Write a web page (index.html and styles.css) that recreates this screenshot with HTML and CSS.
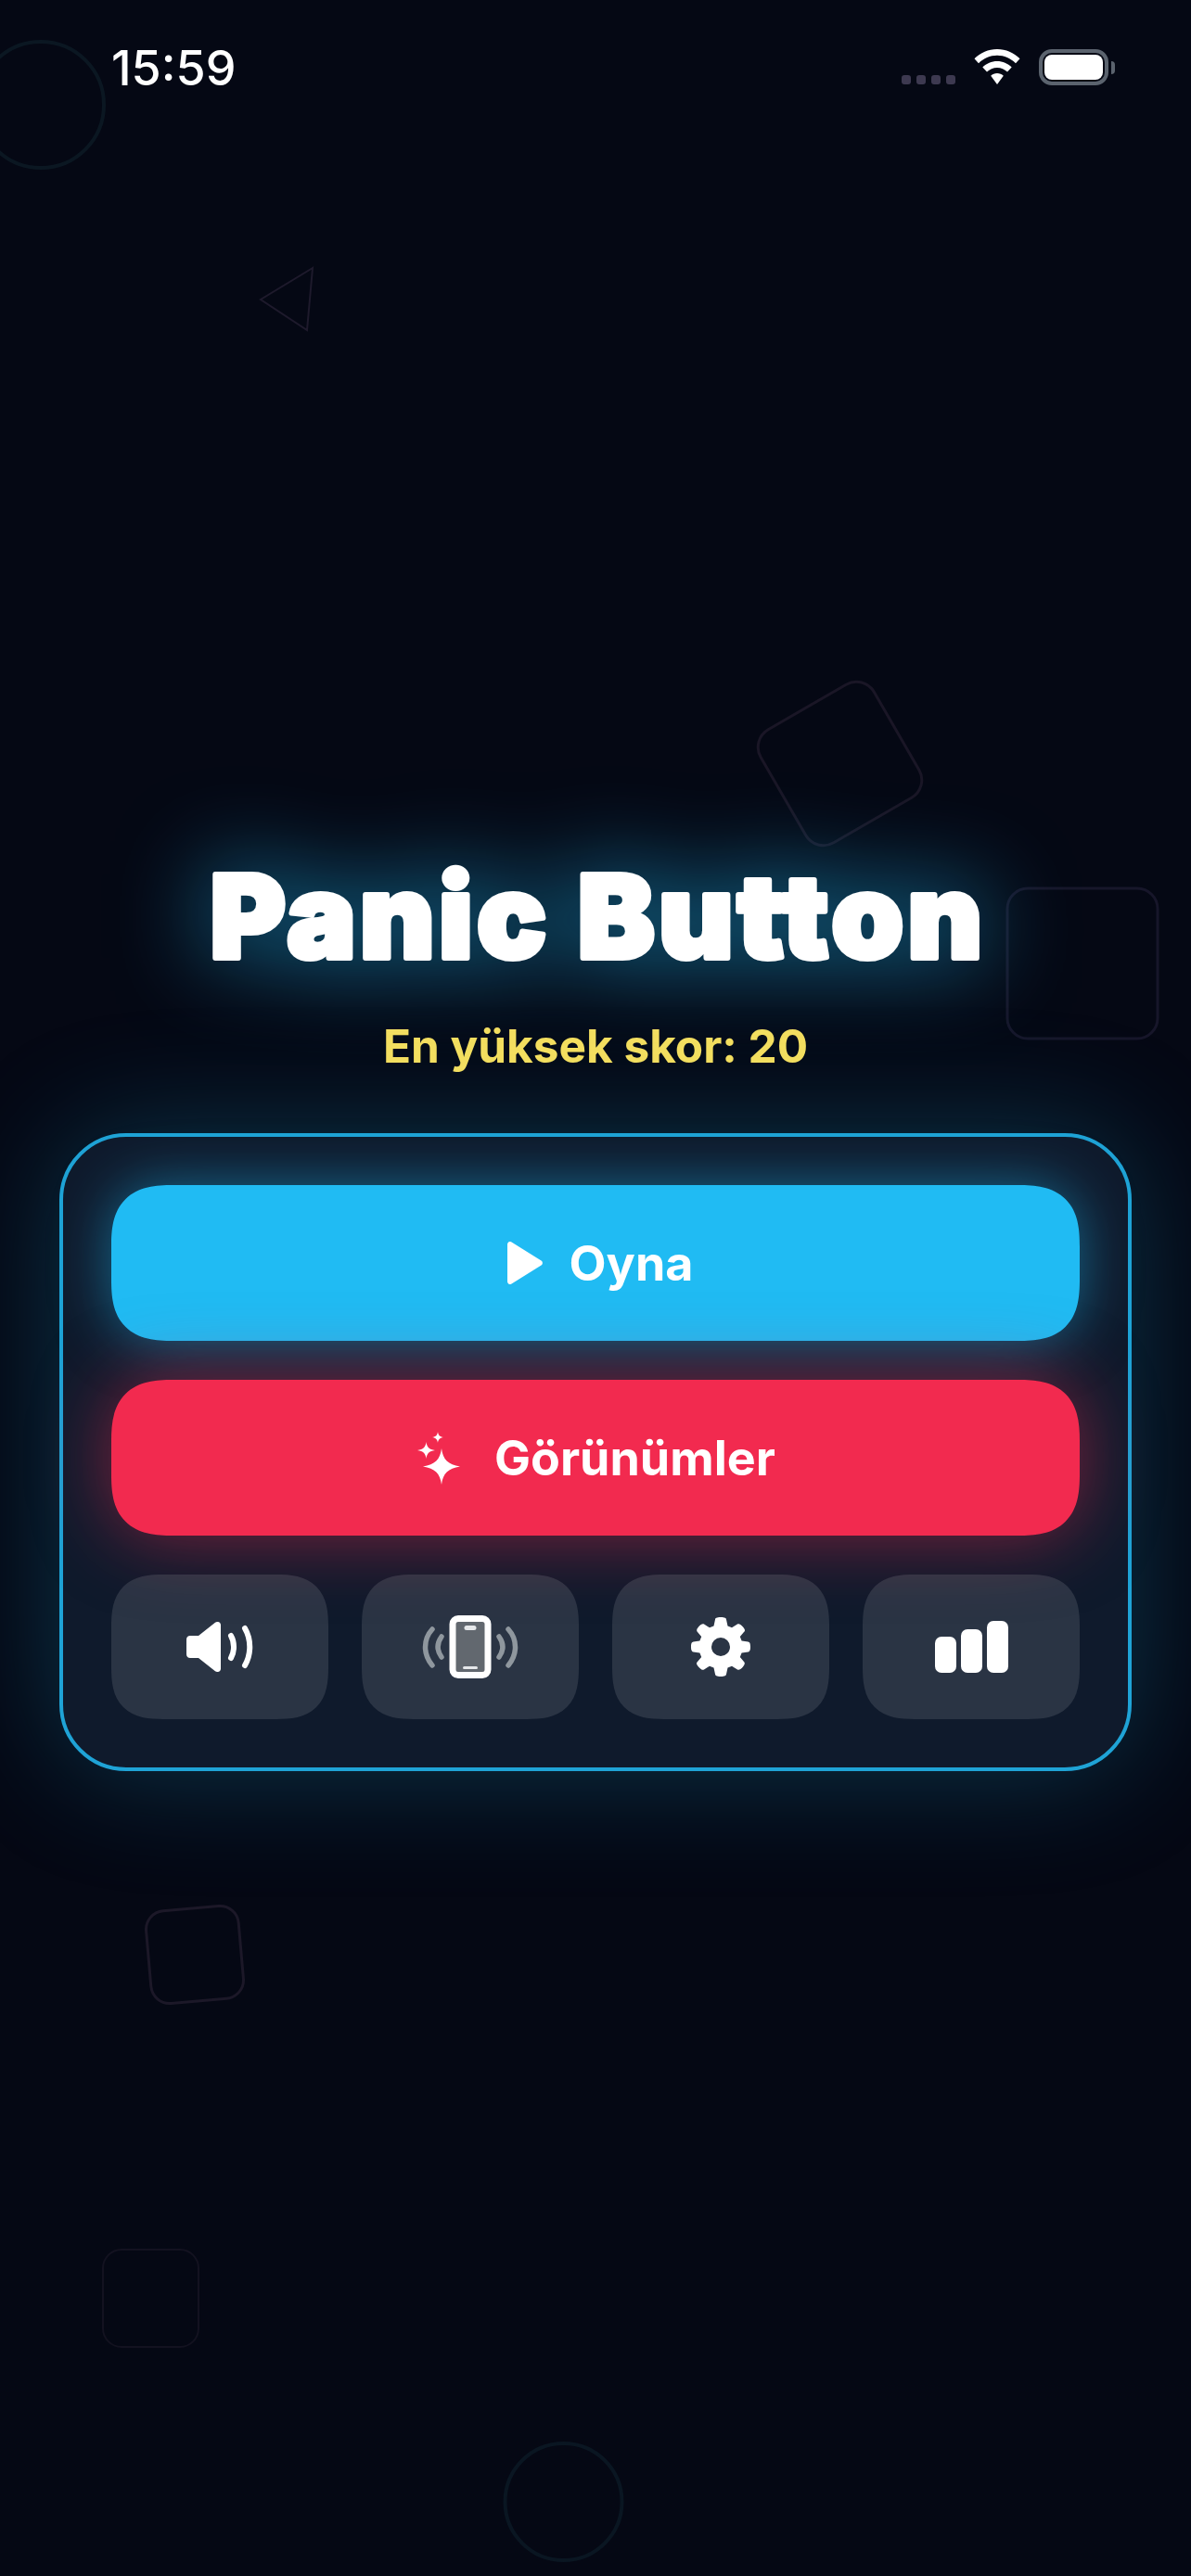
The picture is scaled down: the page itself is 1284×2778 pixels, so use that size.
FILE: index.html
```html
<!DOCTYPE html>
<html lang="en">
<head>
    <meta charset="UTF-8">
    <meta name="viewport" content="width=device-width, initial-scale=1.0">
    <title>Panic Button</title>
    <link rel="stylesheet" href="styles.css">
</head>
<body>
    <svg class="decor" width="1284" height="2778" viewBox="0 0 1284 2778" fill="none">
        <circle cx="44" cy="113" r="68" stroke="#0b1722" stroke-width="4"/>
        <path d="M337 289 L281 323 L331 356 Z" stroke="#1e1a2c" stroke-width="2"/>
        <rect x="835" y="753" width="141" height="141" rx="22" transform="rotate(-30 905.500 823.500)" stroke="#1a1626" stroke-width="3"/>
        <rect x="1086" y="958" width="162" height="162" rx="22" stroke="#17162a" stroke-width="3"/>
        <rect x="160" y="2058" width="100" height="100" rx="20" transform="rotate(-5 210 2108)" stroke="#1c1828" stroke-width="3"/>
        <rect x="111" y="2426" width="103" height="105" rx="20" stroke="#131220" stroke-width="2"/>
        <circle cx="607.500" cy="2698" r="63" stroke="#0a1622" stroke-width="4"/>
    </svg>

    <header class="status-bar">
        <span class="time">15:59</span>
        <div class="status-icons">
            <div class="signal"><i></i><i></i><i></i><i></i></div>
            <svg class="wifi" width="50" height="38" viewBox="0 0 50 38" fill="#fff">
                <path d="M25 0C15.500 0 7 3.800 0.500 10.200L5 15.200C10.300 10 17.300 6.800 25 6.800S39.700 10 45 15.200L49.500 10.200C43 3.800 34.500 0 25 0Z"/>
                <path d="M25 13C19 13 13.500 15.400 9.300 19.500L14 24.600C16.900 21.800 20.800 20 25 20S33.100 21.800 36 24.600L40.700 19.500C36.500 15.400 31 13 25 13Z"/>
                <path d="M25 26C22.400 26 20 27 18.200 28.800L25 38L31.800 28.800C30 27 27.600 26 25 26Z"/>
            </svg>
            <div class="battery"><div class="battery-fill"></div></div>
            <div class="battery-nub"></div>
        </div>
    </header>

    <main class="menu">
        <h1 class="title">
            <svg class="title-art" width="1000" height="150" viewBox="0 0 1000 150">
                <text x="503" y="123" text-anchor="middle">Panic Button</text>
            </svg>
        </h1>
        <p class="high-score">En yüksek skor: 20</p>

        <section class="card">
            <button class="big-btn play-btn" type="button">
                <svg class="play-icon" width="38" height="46" viewBox="0 0 38 46" fill="#fff">
                    <path d="M0 3C0 .6 2.500-.8 4.500.4L36.500 20.500C38.300 21.700 38.300 24.300 36.500 25.500L4.500 45.600C2.500 46.800 0 45.400 0 43Z"/>
                </svg>
                Oyna
            </button>
            <button class="big-btn skins-btn" type="button">
                <svg class="sparkle-icon" width="46" height="57" viewBox="0 0 46 57" fill="#fff">
                    <path d="M26 18C27.500 30 33 35.500 46 37.500C33 39.500 27.500 45 26 57C24.500 45 19 39.500 6 37.500C19 35.500 24.500 30 26 18Z"/>
                    <path d="M9.500 11C10.200 16.500 12.500 19 19 20C12.500 21 10.200 23.500 9.500 29C8.800 23.500 6.500 21 0 20C6.500 19 8.800 16.500 9.500 11Z"/>
                    <path d="M22 0C22.400 3.500 24 5.500 28 6C24 6.500 22.400 8.500 22 12C21.600 8.500 20 6.500 16 6C20 5.500 21.600 3.500 22 0Z"/>
                </svg>
                Görünümler
            </button>

            <div class="tool-row">
                <button class="tool-btn" type="button" aria-label="Ses">
                    <svg width="72" height="54" viewBox="0 0 72 54" fill="none">
                        <path fill="#fff" d="M0 19C0 16.500 1.800 15 4 15H13L31 .8C33.500-1 37 .3 37 3.500V50.500C37 53.700 33.500 55 31 53.200L13 39H4C1.800 39 0 37.500 0 35Z"/>
                        <path d="M48 15C52 22 52 32 48 39" stroke="#fff" stroke-width="6" stroke-linecap="round"/>
                        <path d="M63 7C70 19 70 35 63 47" stroke="#fff" stroke-width="6" stroke-linecap="round"/>
                    </svg>
                </button>
                <button class="tool-btn" type="button" aria-label="Titreşim">
                    <svg width="104" height="68" viewBox="0 0 104 68" fill="none">
                        <rect x="33" y="3.500" width="38" height="61" rx="6" fill="#62686f" stroke="#fff" stroke-width="7"/>
                        <rect x="45.500" y="11" width="13" height="5" rx="2.500" fill="#e6e8ea"/>
                        <rect x="44" y="55" width="16" height="3" rx="1.500" fill="#e6e8ea"/>
                        <g stroke="#8f979e" stroke-width="5.500" stroke-linecap="round">
                            <path d="M11 15C1 26 1 42 11 54"/>
                            <path d="M21 23C16 30 16 38 21 45"/>
                            <path d="M83 23C88 30 88 38 83 45"/>
                            <path d="M93 15C103 26 103 42 93 54"/>
                        </g>
                    </svg>
                </button>
                <button class="tool-btn" type="button" aria-label="Ayarlar">
                    <svg width="64" height="64" viewBox="0 0 64 64">
                        <path fill="#fff" fill-rule="evenodd" d="M26 2.500C26 1 27.500 0 32 0S38 1 38 2.500L39.500 9.500L44 11.300L50 7.500C51.300 6.700 53 7 56 10.500S58 15 57 16L52.800 21L54.600 25.500L61.500 26.500C63 26.800 64 28 64 32S63 37.200 61.500 37.500L54.600 38.500L52.800 43L57 48C58 49 58.500 50.500 56 53.500S51.300 57.300 50 56.500L44 52.700L39.500 54.500L38 61.500C37.700 63 36.500 64 32 64S26.300 63 26 61.500L24.500 54.500L20 52.700L14 56.500C12.700 57.300 11 57 8 53.500S6 49 7 48L11.200 43L9.400 38.500L2.500 37.500C1 37.200 0 36 0 32S1 26.800 2.500 26.500L9.400 25.500L11.200 21L7 16C6 15 5.500 13.500 8 10.500S12.700 6.700 14 7.500L20 11.300L24.500 9.500ZM32 22A10 10 0 1 0 32 42A10 10 0 1 0 32 22Z"/>
                    </svg>
                </button>
                <button class="tool-btn" type="button" aria-label="İstatistik">
                    <div class="bars"><i class="bar-low"></i><i class="bar-mid"></i><i class="bar-high"></i></div>
                </button>
            </div>
        </section>
    </main>
</body>
</html>
```

FILE: styles.css
```css
* {
    box-sizing: border-box;
}

body {
    position: relative;
    width: 1284px;
    height: 2778px;
    margin: 0;
    overflow: hidden;
    background-color: #050814;
    color: #fff;
    font-family: Inter, "Noto Sans", sans-serif;
}

.decor {
    position: absolute;
    top: 0;
    left: 0;
}

.status-bar {
    position: relative;
    display: flex;
    justify-content: space-between;
    height: 110px;
    padding: 44px 82px 0 120px;
}

.time {
    font-size: 52px;
    font-weight: 500;
    line-height: 60px;
}

.status-icons {
    display: flex;
    align-items: flex-start;
    padding-top: 9px;
}

.signal {
    display: flex;
    gap: 6px;
    margin: 28px 20px 0 0;
}

.signal i {
    width: 10px;
    height: 10px;
    border-radius: 3px;
    background-color: #3d3950;
}

.wifi {
    margin-right: 20px;
}

.battery {
    width: 75px;
    height: 39px;
    padding: 2px;
    border: 4px solid #5b636e;
    border-radius: 14px;
}

.battery-fill {
    height: 100%;
    border-radius: 8px;
    background-color: #fff;
}

.battery-nub {
    width: 4px;
    height: 14px;
    margin: 13px 0 0 3px;
    border-radius: 0 7px 7px 0;
    background-color: #5b636e;
}

.menu {
    position: relative;
    display: flex;
    flex-direction: column;
    align-items: center;
    padding: 800px 64px 0;
}

.title {
    margin: 0;
    height: 150px;
}

.title-art {
    display: block;
    overflow: visible;
    filter: drop-shadow(0 0 50px rgba(32, 187, 243, 0.7));
}

.title-art text {
    fill: #fff;
    stroke: #fff;
    stroke-width: 6px;
    stroke-linejoin: round;
    font-size: 124px;
    font-weight: 900;
    letter-spacing: 4.500px;
}

.high-score {
    margin: 38px 0 0;
    color: #fae05c;
    font-size: 49.500px;
    font-weight: 700;
    line-height: 60px;
}

.card {
    display: flex;
    flex-direction: column;
    gap: 42px;
    width: 1156px;
    margin-top: 64px;
    padding: 52px;
    border: 4px solid #1fa3d6;
    border-radius: 72px;
    background-color: #0f1a2c;
    box-shadow: 0 0 130px rgba(31, 187, 243, 0.25);
}

.big-btn {
    display: flex;
    align-items: center;
    justify-content: center;
    width: 100%;
    height: 168px;
    border: 0;
    border-radius: 66px;
    corner-shape: superellipse(1.4);
    color: #fff;
    font-family: inherit;
    font-size: 52px;
    font-weight: 700;
}

.play-btn {
    padding-left: 16px;
    background-color: #20bbf3;
    box-shadow: 0 0 60px rgba(32, 187, 243, 0.5);
}

.play-icon {
    margin-right: 29px;
}

.skins-btn {
    padding-left: 8px;
    background-color: #f22a4f;
    box-shadow: 0 0 80px rgba(243, 42, 80, 0.5);
}

.sparkle-icon {
    margin-right: 37px;
}

.tool-row {
    display: grid;
    grid-template-columns: repeat(4, 1fr);
    gap: 36px;
}

.tool-btn {
    display: flex;
    align-items: center;
    justify-content: center;
    height: 156px;
    padding: 0;
    border: 0;
    border-radius: 56px;
    corner-shape: superellipse(1.4);
    background-color: rgba(255, 255, 255, 0.115);
}

.bars {
    display: flex;
    align-items: flex-end;
    gap: 5px;
    height: 56px;
}

.bars i {
    width: 23px;
    border-radius: 7px;
    background-color: #fff;
}

.bar-low {
    height: 39px;
}

.bar-mid {
    height: 47px;
}

.bar-high {
    height: 56px;
}
```
